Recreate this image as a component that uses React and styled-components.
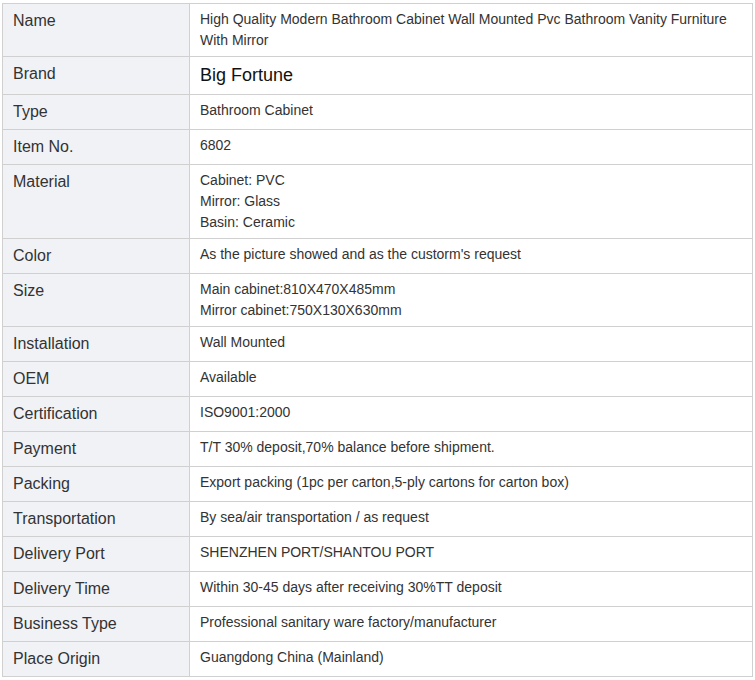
import React from "react";
import styled, { createGlobalStyle } from "styled-components";

const GlobalStyle = createGlobalStyle`
  body {
    margin: 0;
    background: #fff;
    font-family: "Liberation Sans", Arial, sans-serif;
  }
`;

const specs = [
  { label: "Name", value: ["High Quality Modern Bathroom Cabinet Wall Mounted Pvc Bathroom Vanity Furniture With Mirror"] },
  { label: "Brand", value: ["Big Fortune"], big: true },
  { label: "Type", value: ["Bathroom Cabinet"] },
  { label: "Item No.", value: ["6802"] },
  { label: "Material", value: ["Cabinet: PVC", "Mirror: Glass", "Basin: Ceramic"] },
  { label: "Color", value: ["As the picture showed and as the custorm's request"] },
  { label: "Size", value: ["Main cabinet:810X470X485mm", "Mirror cabinet:750X130X630mm"] },
  { label: "Installation", value: ["Wall Mounted"] },
  { label: "OEM", value: ["Available"] },
  { label: "Certification", value: ["ISO9001:2000"] },
  { label: "Payment", value: ["T/T 30% deposit,70% balance before shipment."] },
  { label: "Packing", value: ["Export packing (1pc per carton,5-ply cartons for carton box)"] },
  { label: "Transportation", value: ["By sea/air transportation / as request"] },
  { label: "Delivery Port", value: ["SHENZHEN PORT/SHANTOU PORT"] },
  { label: "Delivery Time", value: ["Within 30-45 days after receiving 30%TT deposit"] },
  { label: "Business Type", value: ["Professional sanitary ware factory/manufacturer"] },
  { label: "Place Origin", value: ["Guangdong China (Mainland)"] },
];

const App = () => {
  return (
    <Wrapper>
      <GlobalStyle />
      <SpecTable>
        <colgroup>
          <col style={{ width: 187 }} />
          <col />
        </colgroup>
        <tbody>
          {specs.map((row) => (
            <tr key={row.label}>
              <Label>{row.label}</Label>
              <Value $big={row.big}>
                {row.value.map((line, i) => (
                  <div key={i}>{line}</div>
                ))}
              </Value>
            </tr>
          ))}
        </tbody>
      </SpecTable>
    </Wrapper>
  );
};

const Wrapper = styled.div`
  padding: 3px 2px 0 2px;
  width: 751px;
`;

const SpecTable = styled.table`
  width: 751px;
  border-collapse: collapse;
  table-layout: fixed;
  color: #333;
`;

const Label = styled.td`
  background: #f1f2f6;
  border: 1px solid #d0d0d0;
  padding: 5px 10px;
  font-size: 16px;
  line-height: 24px;
  vertical-align: top;
`;

const Value = styled.td`
  border: 1px solid #d0d0d0;
  padding: 5px 10px;
  font-size: ${(p) => (p.$big ? "18px" : "14px")};
  line-height: ${(p) => (p.$big ? "27px" : "21px")};
  color: ${(p) => (p.$big ? "#111" : "#333")};
  vertical-align: top;
`;

export default App;
